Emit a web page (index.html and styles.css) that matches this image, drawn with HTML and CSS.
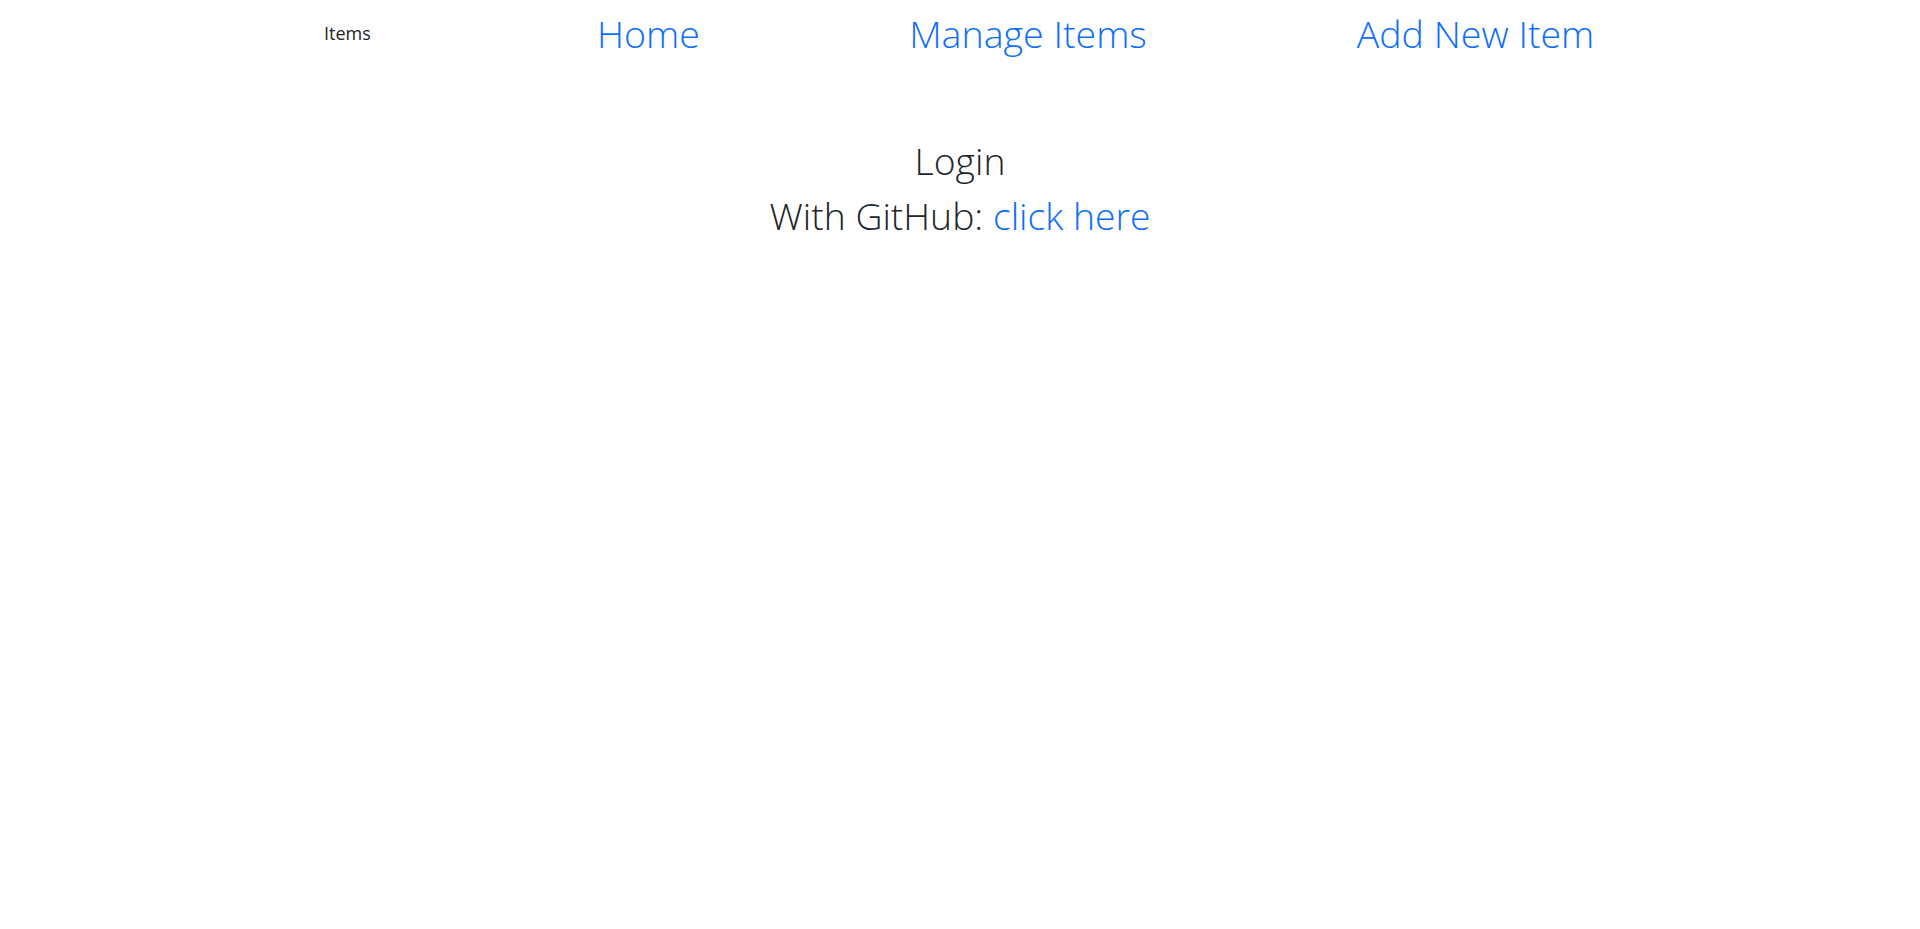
FILE: index.html
```html
<!DOCTYPE html>
<html lang="en">
<head>
<meta charset="utf-8">
<title>Items</title>
<link rel="stylesheet" href="styles.css">
</head>
<body>
<nav class="navbar">
  <a class="brand" href="#">Items</a>
  <a class="nav-link" href="#">Home</a>
  <a class="nav-link" href="#">Manage Items</a>
  <a class="nav-link" href="#">Add New Item</a>
</nav>
<main class="login">
  <h1 class="title">Login</h1>
  <h1 class="title">With GitHub: <a class="link" href="#">click here</a></h1>
</main>
</body>
</html>
```
FILE: styles.css
```css
html, body {
  margin: 0;
  padding: 0;
  background: #ffffff;
}
body {
  font-family: "Open Sans", "Noto Sans", sans-serif;
  font-weight: 300;
  color: #212529;
}
a {
  text-decoration: none;
}
.navbar {
  display: grid;
  grid-template-columns: 225px 199px 560px 335px;
  align-items: start;
  padding: 9px 0 0 324px;
}
.brand {
  font-size: 18px;
  font-weight: 400;
  line-height: 27px;
  color: rgba(0, 0, 0, 0.9);
  padding-top: 11px;
  justify-self: start;
}
.nav-link {
  font-size: 37.6px;
  line-height: 50px;
  color: #0d6efd;
  text-align: center;
}
.login {
  display: flex;
  flex-direction: column;
  align-items: center;
  padding-top: 74px;
}
.title {
  margin: 0;
  font-size: 37.3px;
  font-weight: 300;
  line-height: 55px;
  color: #212529;
}
.link {
  color: #0d6efd;
}
```
